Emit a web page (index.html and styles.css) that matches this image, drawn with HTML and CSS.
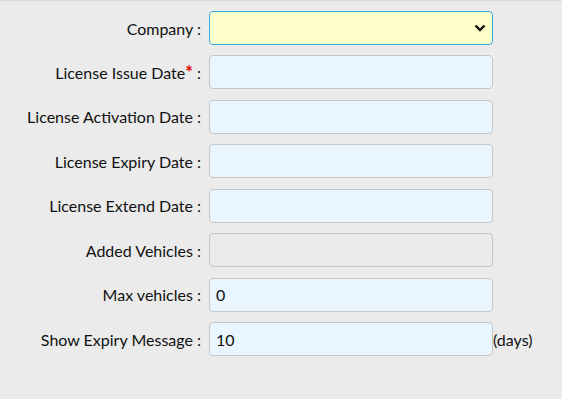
FILE: index.html
```html
<!DOCTYPE html>
<html>
  <head>
    <link rel="stylesheet" href="styles.css">
  </head>
  <body>
    <div class="page">
      <div class="form">
        <label class="lbl">Company :</label>
        <div class="select">
          <svg class="chev" width="12" height="8" viewBox="0 0 12 8">
            <path d="M1.5 1.5 L6 6 L10.5 1.5" fill="none" stroke="#111" stroke-width="2.4"/>
          </svg>
        </div>
        <span></span>

        <label class="lbl">License Issue Date<span class="req">*</span> :</label>
        <input class="field" type="text">
        <span></span>

        <label class="lbl">License Activation Date :</label>
        <input class="field" type="text">
        <span></span>

        <label class="lbl">License Expiry Date :</label>
        <input class="field" type="text">
        <span></span>

        <label class="lbl">License Extend Date :</label>
        <input class="field" type="text">
        <span></span>

        <label class="lbl">Added Vehicles :</label>
        <input class="field disabled" type="text" disabled>
        <span></span>

        <label class="lbl">Max vehicles :</label>
        <input class="field" type="text" value="0">
        <span></span>

        <label class="lbl">Show Expiry Message :</label>
        <input class="field" type="text" value="10">
        <span class="unit">(days)</span>
      </div>
    </div>
  </body>
</html>
```

FILE: styles.css
```css
html, body {
  margin: 0;
  background: #ebebeb;
}
.page {
  border-top: 1px solid #d9d9d9;
  height: 398px;
  font-family: Lato, "Open Sans", sans-serif;
  font-size: 16px;
  color: #111;
}
.form {
  display: grid;
  grid-template-columns: 201px 284px auto;
  grid-auto-rows: 34px;
  column-gap: 8px;
  row-gap: 10.47px;
  padding-top: 10px;
  align-items: center;
}
.lbl {
  text-align: right;
  white-space: nowrap;
}
.req {
  color: #e00000;
  font-weight: bold;
  font-size: 18px;
  line-height: 1;
}
.field, .select {
  box-sizing: border-box;
  height: 34px;
  width: 284px;
  border: 1px solid #c6c6c6;
  border-radius: 4px;
  background: #e9f6ff;
  padding: 0 6px;
  font-family: Lato, "Open Sans", sans-serif;
  font-size: 16px;
  color: #111;
  outline: none;
  margin: 0;
}
.field.disabled {
  background: #ebebeb;
}
.select {
  display: flex;
  align-items: center;
  justify-content: flex-end;
  background: #ffffcc;
  border-color: #3ba6dd;
  padding-right: 6px;
}
.unit {
  margin-left: -8px;
}
```
